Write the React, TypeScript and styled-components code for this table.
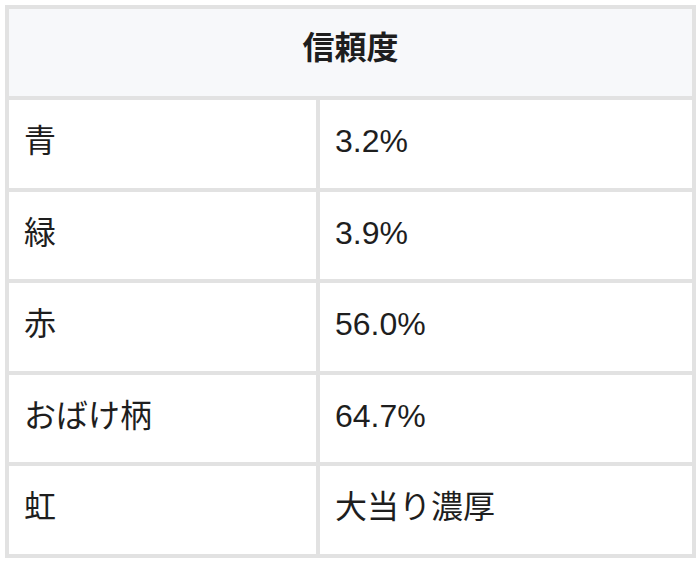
import React from 'react'
import styled, { createGlobalStyle } from 'styled-components'

const GlobalStyle = createGlobalStyle`
  html, body {
    margin: 0;
    padding: 0;
    background: #ffffff;
  }
  body {
    font-family: "Liberation Sans", "Noto Sans CJK JP", sans-serif;
    color: #1e1e1e;
  }
`

const Page = styled.div`
  padding: 5px;
`

const Table = styled.table`
  width: 691px;
  border-collapse: collapse;
  table-layout: fixed;
  border: 4px solid #e2e2e2;
  font-size: 32px;
  line-height: 1.2;
`

const Row = styled.tr<{ $head?: boolean }>`
  height: ${p => (p.$head ? '91px' : '91.5px')};
`

const HeadCell = styled.th`
  padding: 0 0 9px;
  background: #f7f8fa;
  border: 4px solid #e2e2e2;
  font-weight: 700;
  text-align: center;
  vertical-align: middle;
  color: #1e1e1e;
`

const Cell = styled.td`
  padding: 0 15px 5px;
  border: 4px solid #e2e2e2;
  vertical-align: middle;
  text-align: left;
`

const rows = [
  { name: '青', rate: '3.2%' },
  { name: '緑', rate: '3.9%' },
  { name: '赤', rate: '56.0%' },
  { name: 'おばけ柄', rate: '64.7%' },
  { name: '虹', rate: '大当り濃厚' },
]

export default function App() {
  return (
    <Page>
      <GlobalStyle />
      <Table>
        <colgroup>
          <col style={{ width: 311 }} />
          <col />
        </colgroup>
        <thead>
          <Row $head>
            <HeadCell colSpan={2}>信頼度</HeadCell>
          </Row>
        </thead>
        <tbody>
          {rows.map(row => (
            <Row key={row.name}>
              <Cell>{row.name}</Cell>
              <Cell>{row.rate}</Cell>
            </Row>
          ))}
        </tbody>
      </Table>
    </Page>
  )
}
